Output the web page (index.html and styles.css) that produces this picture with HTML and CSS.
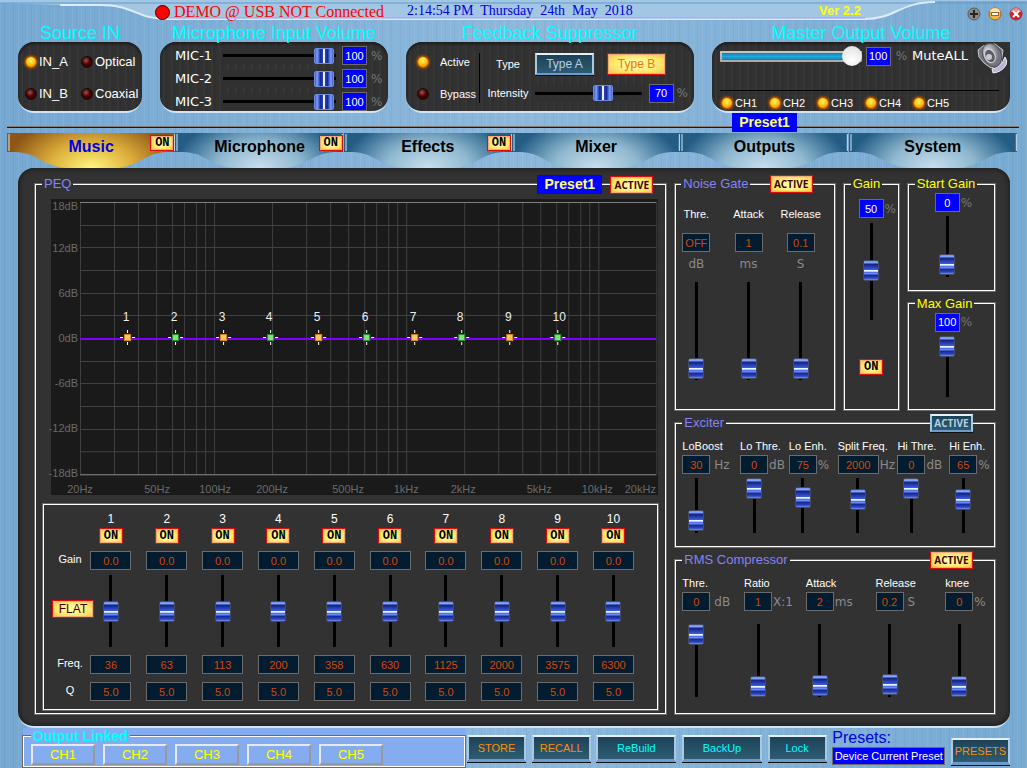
FILE: index.html
```html
<!DOCTYPE html>
<html lang="en">
  <head>
    <meta charset="UTF-8" />
    <meta name="viewport" content="width=device-width, initial-scale=1.0" />
    <title>DSP Control Panel</title>
    <link rel="stylesheet" href="styles.css">
  </head>

  <body>
    <header class="titlebar">
      <svg class="swoosh" viewBox="0 0 1027 24" preserveAspectRatio="none" aria-hidden="true">
        <path d="M0 0H1027V1H935C900 1 895 19 865 19H168C135 19 135 5 100 5H60L0 3Z" fill="#a3c6e2" />
        <path d="M0 3H1027" stroke="#5f9bd0" fill="none" />
        <path d="M60 5H100C135 5 135 19 168 19H865C895 19 900 2 935 2" stroke="#dcecf8" stroke-width="2" fill="none" />
        <path d="M168 18H865" stroke="#9a9aff" fill="none" />
      </svg>
      <div class="titlebar-row">
        <span class="status"><span class="dot"></span>DEMO @ USB NOT Connected</span>
        <span class="clock">2:14:54 PM  Thursday  24th  May  2018</span>
        <span class="version">Ver 2.2</span>
        <span class="window-buttons">
          <button class="win" aria-label="Maximize">
            <svg viewBox="0 0 14 14"><circle cx="7" cy="7" r="6" fill="#8a8a8a" stroke="#5c5c5c" /><path d="M7 3V11M3 7H11" stroke="#222" stroke-width="2" /></svg>
          </button>
          <button class="win" aria-label="Minimize">
            <svg viewBox="0 0 14 14"><circle cx="7" cy="7" r="6" fill="#f3b53c" stroke="#a5602a" /><path d="M2 5a5 4 0 0 1 10 0z" fill="#fbe3a8" /><path d="M3 7H11" stroke="#a5602a" stroke-width="4" /><path d="M4 7H10" stroke="#fff" stroke-width="2" /></svg>
          </button>
          <button class="win" aria-label="Close">
            <svg viewBox="0 0 14 14"><circle cx="7" cy="7" r="6" fill="#d8202c" stroke="#96303c" /><path d="M2 5a5 4 0 0 1 10 0z" fill="#f08a90" /><path d="M4 4L10 10M10 4L4 10" stroke="#fff" stroke-width="2" /></svg>
          </button>
        </span>
      </div>
    </header>

    <section class="top">
      <div>
        <h2>Source IN</h2>
        <div class="box source">
          <label><input type="radio" class="led" name="src" checked />IN_A</label>
          <label><input type="radio" class="led" name="src" />Optical</label>
          <label><input type="radio" class="led" name="src" />IN_B</label>
          <label><input type="radio" class="led" name="src" />Coaxial</label>
        </div>
      </div>

      <div>
        <h2>Microphone Input Volume</h2>
        <div class="box mics">
          <div class="mic"><label for="mic1">MIC-1</label><input type="range" class="hslider" id="mic1" value="98" /><input type="text" class="blue" value="100" aria-label="MIC-1 value" /><span class="pct">%</span></div>
          <div class="mic"><label for="mic2">MIC-2</label><input type="range" class="hslider" id="mic2" value="98" /><input type="text" class="blue" value="100" aria-label="MIC-2 value" /><span class="pct">%</span></div>
          <div class="mic"><label for="mic3">MIC-3</label><input type="range" class="hslider" id="mic3" value="98" /><input type="text" class="blue" value="100" aria-label="MIC-3 value" /><span class="pct">%</span></div>
        </div>
      </div>

      <div>
        <h2>Feedback Suppressor</h2>
        <div class="box feedback">
          <div class="fb-mode">
            <label><input type="radio" class="led" name="fb" checked />Active</label>
            <label><input type="radio" class="led" name="fb" />Bypass</label>
          </div>
          <div class="fb-set">
            <div class="fb-row"><span>Type</span><button class="steel type">Type A</button><button class="lit type">Type B</button></div>
            <div class="fb-row"><label for="intensity">Intensity</label><input type="range" class="hslider" id="intensity" value="67" /><input type="text" class="blue" value="70" aria-label="Intensity value" /><span class="pct">%</span></div>
          </div>
        </div>
      </div>

      <div>
        <h2>Master Output Volume</h2>
        <div class="box master">
          <div class="master-row">
            <input type="range" class="volume" value="100" aria-label="Master volume" />
            <input type="text" class="blue" value="100" aria-label="Master volume value" /><span class="pct">%</span>
            <span class="mute">MuteALL</span>
            <button class="speaker" aria-label="Mute all">
              <svg viewBox="0 0 35 34">
                <defs>
                  <radialGradient id="cone" cx="40%" cy="35%"><stop offset="0" stop-color="#f4f4fa" /><stop offset="1" stop-color="#75757f" /></radialGradient>
                </defs>
                <path d="M30 15q3 4 1 8q-4 7-13 8l-1-4q9-1 13-12z" fill="#b9b4e0" stroke="#eee" />
                <path d="M3 8L8 4L20 2L28 8L26 22L16 26L9 21L4 15Z" fill="#77777f" stroke="#c9c9d2" />
                <ellipse cx="17" cy="13" rx="9" ry="12" transform="rotate(-25 17 13)" fill="url(#cone)" stroke="#55555c" />
                <ellipse cx="15" cy="14" rx="5" ry="7" transform="rotate(-25 15 14)" fill="#5d5d66" stroke="#ddd" />
                <circle cx="14" cy="15" r="3" fill="#c9c9d6" />
              </svg>
            </button>
          </div>
          <div class="channels">
            <label><input type="checkbox" class="led" checked />CH1</label>
            <label><input type="checkbox" class="led" checked />CH2</label>
            <label><input type="checkbox" class="led" checked />CH3</label>
            <label><input type="checkbox" class="led" checked />CH4</label>
            <label><input type="checkbox" class="led" checked />CH5</label>
          </div>
        </div>
      </div>
    </section>

    <div class="preset-strip"><span class="preset">Preset1</span></div>

    <svg class="defs" aria-hidden="true">
      <defs>
        <radialGradient id="steelTab" cx=".5" cy="1" r=".5" gradientTransform="translate(0 -2) scale(1 3)"><stop offset="0" stop-color="#c8deec" /><stop offset=".5" stop-color="#8fb8d0" /><stop offset="1" stop-color="#235d85" /></radialGradient>
        <radialGradient id="goldTab" cx=".5" cy="1" r=".5" gradientTransform="translate(0 -2) scale(1 3)"><stop offset="0" stop-color="#fff67c" /><stop offset=".5" stop-color="#dcae3a" /><stop offset="1" stop-color="#8e5616" /></radialGradient>
        <symbol id="tabShape" viewBox="0 0 168 35" preserveAspectRatio="none">
          <path d="M0 0H168V19C140 18 140 27 120 33Q116 35 110 35H60Q54 35 48 33C28 27 28 18 0 19Z" />
          <path d="M2 1V18M167 1V18" stroke="#d4e8f6" />
        </symbol>
      </defs>
    </svg>
    <nav class="tabs">
      <div class="tab current"><svg class="shape"><use href="#tabShape" /></svg><a href="#music">Music</a><button class="lit on">ON</button></div>
      <div class="tab"><svg class="shape"><use href="#tabShape" /></svg><a href="#microphone">Microphone</a><button class="lit on">ON</button></div>
      <div class="tab"><svg class="shape"><use href="#tabShape" /></svg><a href="#effects">Effects</a><button class="lit on">ON</button></div>
      <div class="tab"><svg class="shape"><use href="#tabShape" /></svg><a href="#mixer">Mixer</a></div>
      <div class="tab"><svg class="shape"><use href="#tabShape" /></svg><a href="#outputs">Outputs</a></div>
      <div class="tab"><svg class="shape"><use href="#tabShape" /></svg><a href="#system">System</a></div>
    </nav>

    <main class="panel">
      <fieldset class="peq">
        <legend>PEQ</legend>
        <div class="badges"><span class="preset">Preset1</span><button class="lit active">ACTIVE</button></div>
        <svg class="graph" id="graph" viewBox="0 0 607 296"></svg>
        <div class="eq">
          <div class="band names">
            <span></span><span></span><span class="name">Gain</span>
            <button class="lit flat">FLAT</button>
            <span class="name">Freq.</span><span class="name">Q</span>
          </div>
          <div class="bands" id="bands"></div>
        </div>
      </fieldset>

      <div class="side">
        <div class="side-top">
          <fieldset class="gate">
            <legend>Noise Gate</legend>
            <div class="badges"><button class="lit active">ACTIVE</button></div>
            <div class="gate-col"><label for="ngThre">Thre.</label><input type="text" class="num" value="OFF" aria-label="Threshold value" /><span class="unit">dB</span><input type="range" class="vslider" id="ngThre" value="1" /></div>
            <div class="gate-col"><label for="ngAttack">Attack</label><input type="text" class="num" value="1" aria-label="Attack value" /><span class="unit">ms</span><input type="range" class="vslider" id="ngAttack" value="1" /></div>
            <div class="gate-col"><label for="ngRelease">Release</label><input type="text" class="num" value="0.1" aria-label="Release value" /><span class="unit">S</span><input type="range" class="vslider" id="ngRelease" value="1" /></div>
          </fieldset>

          <fieldset class="gain">
            <legend>Gain</legend>
            <div class="pair"><input type="text" class="blue" value="50" aria-label="Gain value" /><span class="pct">%</span></div>
            <input type="range" class="vslider" value="51" aria-label="Gain" />
            <button class="lit on">ON</button>
          </fieldset>

          <div class="gain-stack">
            <fieldset class="gain small">
              <legend>Start Gain</legend>
              <div class="pair"><input type="text" class="blue" value="0" aria-label="Start gain value" /><span class="pct">%</span></div>
              <input type="range" class="vslider" value="5" aria-label="Start gain" />
            </fieldset>
            <fieldset class="gain small">
              <legend>Max Gain</legend>
              <div class="pair"><input type="text" class="blue" value="100" aria-label="Max gain value" /><span class="pct">%</span></div>
              <input type="range" class="vslider" value="100" aria-label="Max gain" />
            </fieldset>
          </div>
        </div>

        <fieldset class="exciter">
          <legend>Exciter</legend>
          <div class="badges"><button class="steel active">ACTIVE</button></div>
          <div class="fx"><label for="loBoost">LoBoost</label><div class="pair wide"><input type="text" class="num" value="30" aria-label="LoBoost value" /><span class="unit">Hz</span></div><input type="range" class="vslider" id="loBoost" value="7" /></div>
          <div class="fx"><label for="loThre">Lo Thre.</label><div class="pair"><input type="text" class="num" value="0" aria-label="Lo threshold value" /><span class="unit">dB</span></div><input type="range" class="vslider" id="loThre" value="100" /></div>
          <div class="fx"><label for="loEnh">Lo Enh.</label><div class="pair"><input type="text" class="num" value="75" aria-label="Lo enhance value" /><span class="unit">%</span></div><input type="range" class="vslider" id="loEnh" value="75" /></div>
          <div class="fx long"><label for="split">Split Freq.</label><div class="pair"><input type="text" class="num" value="2000" aria-label="Split frequency value" /><span class="unit">Hz</span></div><input type="range" class="vslider" id="split" value="67" /></div>
          <div class="fx"><label for="hiThre">Hi Thre.</label><div class="pair"><input type="text" class="num" value="0" aria-label="Hi threshold value" /><span class="unit">dB</span></div><input type="range" class="vslider" id="hiThre" value="100" /></div>
          <div class="fx"><label for="hiEnh">Hi Enh.</label><div class="pair"><input type="text" class="num" value="65" aria-label="Hi enhance value" /><span class="unit">%</span></div><input type="range" class="vslider" id="hiEnh" value="67" /></div>
        </fieldset>

        <fieldset class="rms">
          <legend>RMS Compressor</legend>
          <div class="badges"><button class="lit active">ACTIVE</button></div>
          <div class="fx"><label for="rThre">Thre.</label><div class="pair wide"><input type="text" class="num" value="0" aria-label="Threshold value" /><span class="unit">dB</span></div><input type="range" class="vslider" id="rThre" value="100" /></div>
          <div class="fx"><label for="rRatio">Ratio</label><div class="pair"><input type="text" class="num" value="1" aria-label="Ratio value" /><span class="unit">X:1</span></div><input type="range" class="vslider" id="rRatio" value="0" /></div>
          <div class="fx"><label for="rAttack">Attack</label><div class="pair"><input type="text" class="num" value="2" aria-label="Attack value" /><span class="unit">ms</span></div><input type="range" class="vslider" id="rAttack" value="2" /></div>
          <div class="fx"><label for="rRelease">Release</label><div class="pair wide"><input type="text" class="num" value="0.2" aria-label="Release value" /><span class="unit">S</span></div><input type="range" class="vslider" id="rRelease" value="4" /></div>
          <div class="fx"><label for="rKnee">knee</label><div class="pair"><input type="text" class="num" value="0" aria-label="Knee value" /><span class="unit">%</span></div><input type="range" class="vslider" id="rKnee" value="0" /></div>
        </fieldset>
      </div>
    </main>

    <footer class="footer">
      <div class="linked-wrap">
        <fieldset class="linked">
          <legend>Output Linked</legend>
          <button class="ch">CH1</button>
          <button class="ch">CH2</button>
          <button class="ch">CH3</button>
          <button class="ch">CH4</button>
          <button class="ch">CH5</button>
        </fieldset>
      </div>
      <div class="actions">
        <button class="steel big orange">STORE</button>
        <button class="steel big orange">RECALL</button>
        <button class="steel big cyan long">ReBuild</button>
        <button class="steel big cyan long">BackUp</button>
        <button class="steel big cyan">Lock</button>
        <div class="current-preset">
          <label for="devicePreset">Presets:</label>
          <input type="text" id="devicePreset" value="Device Current Preset" />
        </div>
        <button class="steel big orange last">PRESETS</button>
      </div>
    </footer>

    <script src="script.js"></script>
  </body>
</html>
```
FILE: styles.css
```css
* {
  box-sizing: border-box;
}
body {
  margin: 0;
  min-height: 100vh;
  font-family: "Liberation Sans", Arial, sans-serif;
  font-size: 11px;
  line-height: 16px;
  color: #fff;
  background:
    repeating-linear-gradient(90deg, rgba(255, 255, 255, 0.06) 0 1px, transparent 1px 4px, rgba(20, 60, 110, 0.05) 4px 5px, transparent 5px 9px),
    linear-gradient(90deg, #76a8d2, #8db8dc 50%, #78aad2);
}
button, input {
  font: inherit;
  margin: 0;
  padding: 0;
}
button {
  cursor: pointer;
  white-space: nowrap;
}
fieldset {
  position: relative;
  min-width: 0;
  margin: 0;
  padding: 0 6px;
  border: 1px solid #fff;
  box-shadow: 0 0 0 1px #6b6b6b;
}
legend {
  padding: 0 2px;
  background: #323232;
  color: #8484f8;
  font-size: 13px;
  line-height: 18px;
}

/* title bar */
.titlebar {
  display: grid;
  height: 24px;
}
.swoosh, .titlebar-row {
  grid-area: 1 / 1;
}
.swoosh {
  width: 100%;
  height: 24px;
}
.titlebar-row {
  display: grid;
  grid-template-columns: 155fr 252fr 412fr 148fr 60px;
  color: #0000e0;
  font-family: "Liberation Serif", "Times New Roman", serif;
  font-size: 14px;
  line-height: 22px;
  white-space: pre;
}
.status {
  grid-column: 2;
  display: flex;
  align-items: center;
  gap: 4px;
  font-size: 16px;
  color: #f00;
}
.dot {
  width: 15px;
  height: 15px;
  border: 1px solid #300;
  border-radius: 50%;
  background: #f00;
}
.version {
  color: #ff0;
  font: bold 13px/22px "Liberation Sans", Arial, sans-serif;
}
.window-buttons {
  display: flex;
  gap: 7px;
  align-items: flex-end;
  padding-bottom: 3px;
}
.win {
  width: 14px;
  height: 14px;
  border: 0;
  background: none;
}
.win svg {
  display: block;
}

/* top boxes */
.top {
  display: grid;
  grid-template-columns: minmax(0, 124fr) minmax(0, 228fr) minmax(0, 288fr) minmax(0, 298fr);
  gap: 18px;
  padding: 0 17px 0 18px;
}
h2 {
  margin: 0;
  color: #0ff;
  font-size: 18px;
  font-weight: normal;
  line-height: 18px;
  text-align: center;
  white-space: nowrap;
}
.box {
  height: 71px;
  border-radius: 16px;
  border-bottom: 2px solid #cfe4f6;
  background: repeating-linear-gradient(90deg, #323232 0 3px, #363636 3px 5px, #303030 5px 8px);
  box-shadow: inset 0 2px 3px #1c1c1c;
}
.box label {
  display: flex;
  align-items: center;
}
.led {
  appearance: none;
  flex: none;
  width: 12px;
  height: 12px;
  border: 1px solid #1c0a0a;
  border-radius: 50%;
  background: radial-gradient(circle at 40% 35%, #a05050, #4a0000 45%, #200000);
}
.led:checked {
  border-color: #c05a00;
  background: radial-gradient(circle at 45% 35%, #fff27a, #ffc000 50%, #e07000);
  box-shadow: 0 0 2px 1px #a04800;
}
.pct, .unit {
  color: #8a8a8a;
  font-family: "DejaVu Sans", Verdana, sans-serif;
  font-size: 12px;
}
.pct {
  color: #757575;
}
.blue {
  flex: none;
  width: 25px;
  height: 19px;
  border: 1px solid #6b6b6b;
  background: #00f;
  color: #fff;
  text-align: center;
}
.source {
  display: grid;
  grid-template-columns: 56fr 61fr;
  align-content: center;
  row-gap: 16px;
  padding: 2px 0 0 7px;
  font-size: 13px;
}
.source label {
  gap: 2px;
}
.mics {
  display: flex;
  flex-direction: column;
  justify-content: space-between;
  padding: 4px 3px 0 15px;
}
.mic {
  display: flex;
  align-items: center;
  gap: 6px;
}
.mic label {
  width: 42px;
  font-family: "DejaVu Sans", Verdana, sans-serif;
  font-size: 13px;
}
.mic .pct {
  width: 14px;
  margin-left: -2px;
}

/* sliders */
.hslider, .vslider {
  appearance: none;
  display: block;
  margin: 0;
}
.hslider {
  flex: 1;
  min-width: 0;
  height: 17px;
  background: linear-gradient(#000, #000) center / 100% 3px no-repeat #303030;
}
.hslider::-webkit-slider-thumb {
  appearance: none;
  width: 20px;
  height: 16px;
  border: 1px solid #6d8ae0;
  border-radius: 2px;
  background: linear-gradient(90deg, #3d5ed0, #7ea0ff 12%, #1a2a94 30%, #2a40b0 44%, #e8f2ff 46% 54%, #2a40b0 56%, #1a2a94 70%, #7ea0ff 88%, #3d5ed0);
}
.vslider {
  writing-mode: vertical-lr;
  direction: rtl;
  width: 16px;
  height: 72px;
  background: linear-gradient(#000, #000) center / 3px 100% no-repeat;
}
.vslider::-webkit-slider-thumb {
  appearance: none;
  width: 16px;
  height: 21px;
  border: 1px solid #444a60;
  border-radius: 2px;
  background: linear-gradient(#6f92f4, #7ea0ff 8%, #16247c 18%, #2c46c0 36%, #3c5ce0 46%, #e8f6ff 47% 55%, #3c5ce0 56%, #6a8af8 66%, #1a2a94 76%, #2c46c0 90%, #6f92f4);
}
.volume {
  appearance: none;
  flex: 1;
  min-width: 0;
  height: 21px;
  border-radius: 6px;
  background: linear-gradient(#0f7fb4, #22a8e0 50%, #0f7fb4) 2px center / 130px 7px no-repeat, linear-gradient(#c8c8c0, #a8a8a0) center / 100% 11px no-repeat;
}
.volume::-webkit-slider-thumb {
  appearance: none;
  width: 20px;
  height: 20px;
  border-radius: 50%;
  background: radial-gradient(circle at 50% 70%, #fff, #dcdcdc);
}

/* glossy buttons */
.lit {
  border: 1px solid #d81010;
  background: radial-gradient(ellipse at 50% 50%, #fff79a 30%, #fbe05a 70%, #f3b070);
  box-shadow: inset 0 0 0 1px #f5a878;
  color: #400000;
}
.steel {
  border: 2px solid #a9c8e2;
  border-top-color: #e4f0fa;
  border-bottom-color: #6d9ccc;
  background: linear-gradient(#1d4258, #2d5c72);
  color: #b4cfe4;
  box-shadow: 0 1px 0 #101010;
}
.on {
  width: 24px;
  height: 16px;
  color: #000;
  font: bold 12px/12px "Liberation Mono", monospace;
}
.active {
  width: 43px;
  height: 18px;
  font: bold 10px/12px "Open Sans", sans-serif;
}
.type {
  width: 59px;
  height: 22px;
  font-size: 12px;
}
.lit.type {
  color: #f07800;
}
.feedback {
  display: flex;
  align-items: center;
  padding: 2px 6px 0 11px;
}
.fb-mode {
  flex: none;
  display: flex;
  flex-direction: column;
  justify-content: space-between;
  gap: 16px;
  padding: 1px 0;
  width: 63px;
  height: 50px;
  border-right: 1px solid #000;
}
.fb-mode label {
  gap: 11px;
}
.fb-set {
  flex: 1;
  display: flex;
  flex-direction: column;
  gap: 9px;
  min-width: 0;
  padding-left: 8px;
}
.fb-row {
  display: flex;
  align-items: center;
}
.fb-row > :first-child {
  flex: none;
  justify-content: center;
  width: 40px;
  margin-right: 7px;
  text-align: center;
}
.fb-row .type + .type {
  margin-left: 13px;
}
.fb-row .blue {
  margin: 0 3px 0 7px;
}
.master {
  padding: 0 0 0 8px;
}
.master-row {
  display: flex;
  align-items: center;
  height: 34px;
}
.master-row .volume {
  margin: 0 4px 6px 0;
}
.master-row .blue {
  margin-bottom: 6px;
}
.master-row .pct {
  margin: 0 5px 6px;
}
.mute {
  margin: 0 7px 6px 0;
  font-family: "DejaVu Sans", Verdana, sans-serif;
  font-size: 13px;
}
.speaker {
  width: 35px;
  height: 34px;
  border: 0;
  background: #303030;
}
.speaker svg {
  display: block;
}
.channels {
  display: flex;
  margin: 14px 11px 0 0;
  padding-top: 4px;
  border-top: 1px solid #000;
}
.channels label {
  gap: 2px;
  width: 48px;
  padding-left: 1px;
}

/* preset strip and tabs */
.preset-strip {
  display: flex;
  height: 19px;
  margin: 0 8px 0 7px;
  padding-left: 70.6%;
  background: linear-gradient(#8a7a70 50%, #0000d0 50%) 0 13px / 100% 2px no-repeat;
}
.preset {
  display: block;
  width: 65px;
  height: 19px;
  background: #00f;
  color: #ffff80;
  font-size: 14px;
  font-weight: bold;
  line-height: 18px;
  text-align: center;
}
.defs {
  display: block;
  width: 0;
  height: 0;
}
.tabs {
  display: grid;
  grid-template-columns: repeat(6, 1fr);
  height: 35px;
  margin: 1px 10px 0 7px;
}
.tab {
  position: relative;
  display: grid;
}
.shape {
  grid-area: 1 / 1;
  width: 100%;
  height: 35px;
  fill: url(#steelTab);
}
.current .shape {
  fill: url(#goldTab);
}
.tab a {
  grid-area: 1 / 1;
  z-index: 1;
  color: #000;
  font-size: 16px;
  font-weight: bold;
  line-height: 27px;
  text-align: center;
  text-decoration: none;
}
.current a {
  color: #0000e0;
}
.tab .on {
  position: absolute;
  z-index: 2;
  top: 2px;
  right: 1px;
}

/* main panel */
.panel {
  display: grid;
  grid-template-columns: 632fr 320fr;
  gap: 9px;
  margin: 0 17px 0 18px;
  padding: 7px 15px 12px 17px;
  border-radius: 16px;
  border-bottom: 2px solid #cfe4f6;
  background: #323232;
  box-shadow: inset 0 0 4px 2px #222;
}
.badges {
  position: absolute;
  top: -18px;
  right: 21px;
  display: flex;
  gap: 8px;
  align-items: center;
}
.peq {
  padding: 6px 7px 2px 6px;
}
.peq .badges {
  right: 12px;
}
.graph {
  display: block;
  overflow: visible;
  width: calc(100% - 9px);
  margin: 0 0 9px 9px;
  background: #1a1a1a;
}
.graph .grid line {
  stroke: #404040;
}
.graph .frame {
  stroke: #808080;
}
.graph .curve {
  stroke: #8000ff;
  stroke-width: 2;
}
.graph .scale {
  fill: #6a6a6a;
  font-size: 11px;
}
.graph .mark {
  fill: #eee;
  font-size: 12px;
  text-anchor: middle;
}
.graph .cross {
  stroke: #fff;
}
.eq {
  display: flex;
  margin-left: 1px;
  padding: 6px 16px 8px 8px;
  border: 1px solid #fff;
  box-shadow: 0 0 0 1px #6b6b6b;
}
.band {
  display: grid;
  grid-template-rows: 17px 23px 24px 80px 27px 19px;
  justify-items: center;
  align-items: start;
}
.names {
  width: 31px;
  justify-items: start;
}
.name {
  width: 36px;
  text-align: center;
}
.flat {
  z-index: 1;
  align-self: center;
  width: 42px;
  height: 18px;
  margin-bottom: 12px;
  font-size: 12px;
}
.bands {
  flex: 1;
  display: grid;
  grid-template-columns: repeat(10, 1fr);
}
.bands label {
  font-size: 12px;
}
.num {
  flex: none;
  width: 28px;
  height: 19px;
  border: 1px solid #6b6b6b;
  background: #041c30;
  color: #d04808;
  text-align: center;
}
.band .num {
  width: 41px;
}

/* right side */
.side {
  display: flex;
  flex-direction: column;
  gap: 4px;
}
.side-top {
  display: grid;
  grid-template-columns: 159fr 55fr 87fr;
  gap: 9px;
}
.gate {
  display: flex;
  justify-content: space-between;
  padding: 13px 18px 0 5px;
}
.gate-col {
  display: flex;
  flex-direction: column;
  align-items: center;
  width: 30px;
}
.gate-col .num {
  margin: 11px 0 4px;
}
.gate-col .vslider {
  height: 98px;
  margin-top: 10px;
}
.gain {
  display: flex;
  flex-direction: column;
  align-items: center;
  padding-top: 6px;
  padding-bottom: 34px;
}
.gain legend {
  color: #ff0;
}
.gain .pair {
  margin-left: 12px;
}
.gain .vslider {
  height: 97px;
  margin-top: 5px;
}
.gain .on {
  margin-top: 39px;
}
.gain-stack {
  display: flex;
  flex-direction: column;
  gap: 4px;
}
.gain.small {
  flex: 1;
  padding: 0 14px 0 6px;
}
.gain.small .vslider {
  height: 61px;
  margin-top: 4px;
}
.pair {
  display: flex;
  align-items: center;
  gap: 1px;
}
.pair.wide {
  gap: 4px;
}
.exciter, .rms {
  display: grid;
  padding-top: 6px;
}
.exciter {
  grid-template-columns: 58fr 49fr 49fr 60fr 52fr 45fr;
  padding-right: 0;
  padding-bottom: 13px;
}
.rms {
  grid-template-columns: 62fr 62fr 70fr 70fr 49fr;
  padding-right: 0;
  padding-bottom: 16px;
}
.fx {
  min-width: 0;
  white-space: nowrap;
}
.fx label {
  display: block;
  margin-bottom: 1px;
}
.fx .vslider {
  height: 55px;
  margin: 4px 0 0 6px;
}
.fx.long .num {
  width: 41px;
}
.fx.long .vslider {
  margin-left: 12px;
}
.rms .vslider {
  height: 73px;
  margin-top: 13px;
}

/* footer */
.footer {
  display: grid;
  grid-template-columns: 442fr 543fr;
  gap: 2px;
  padding: 0 17px 0 23px;
}
.linked-wrap {
  background: #84acee;
}
.linked {
  display: flex;
  gap: 8px;
  height: 39px;
  padding: 0 7px;
}
.linked legend {
  background: #84acee;
  color: #0ff;
  font-weight: bold;
  font-size: 14px;
  line-height: 16px;
}
.ch {
  width: 64px;
  height: 21px;
  border: 2px outset #e8e8f0;
  background: #84acee;
  color: #ff0;
  font-size: 13px;
  line-height: 16px;
}
.actions {
  display: flex;
  justify-content: space-between;
  padding-top: 7px;
}
.big {
  width: 59px;
  height: 27px;
  border-bottom-width: 3px;
}
.big.long {
  width: 80px;
}
.big.last {
  margin-top: 3px;
}
.orange {
  color: #ff8c00;
}
.cyan {
  color: #0ff;
}
.current-preset {
  margin-top: -6px;
  width: 113px;
  color: #0000e0;
}
.current-preset label {
  display: block;
  font-size: 16px;
  line-height: 18px;
}
.current-preset input {
  display: block;
  width: 100%;
  height: 18px;
  border: 1px solid #6b6b6b;
  background: #00f;
  color: #fff;
  text-align: center;
}
```
FILE: script.js
```js
const graph = document.getElementById("graph");
const left = 29;
const right = 605;
const top0 = 3;
const bottom = 275;

// 20Hz - 20kHz on a log scale
function freqX(f) {
  return Math.round(left + (Math.log10(f / 20) * (right - left)) / 3) + 0.5;
}

let svg = '<g class="grid">';
for (const decade of [10, 100, 1000, 10000]) {
  for (let i = 1; i < 10; i++) {
    const f = decade * i;
    if (f < 20 || f > 20000) continue;
    svg += `<line x1="${freqX(f)}" x2="${freqX(f)}" y1="${top0}" y2="${bottom}" />`;
  }
}
for (let i = 0; i <= 12; i++) {
  const y = Math.round(top0 + ((bottom - top0) * i) / 12) + 0.5;
  svg += `<line x1="${left}" x2="${right}" y1="${y}" y2="${y}" />`;
}
svg += "</g>";
svg += `<line class="frame" x1="${left}" x2="${right}" y1="3.5" y2="3.5" />`;
svg += `<line class="frame" x1="${left}" x2="${right}" y1="275.5" y2="275.5" />`;
svg += `<line class="curve" x1="${left}" x2="${right}" y1="140" y2="140" />`;

["18dB", "12dB", "6dB", "0dB", "-6dB", "-12dB", "-18dB"].forEach((t, i) => {
  const y = i === 0 ? 11 : 8 + i * 45;
  svg += `<text class="scale" text-anchor="end" x="27" y="${y}">${t}</text>`;
});
const freqs = { "20Hz": 29, "50Hz": 106, "100Hz": 164, "200Hz": 221, "500Hz": 297, "1kHz": 355, "2kHz": 412, "5kHz": 488, "10kHz": 546, "20kHz": 589 };
for (const t in freqs) {
  svg += `<text class="scale" text-anchor="middle" x="${freqs[t]}" y="294">${t}</text>`;
}
for (let i = 0; i < 10; i++) {
  const x = Math.round(76 + i * 47.75);
  const fill = i % 2 ? "#7be87b" : "#ffc860";
  const edge = i % 2 ? "#2f8f2f" : "#d88a10";
  svg += `<path class="cross" d="M${x - 7} 138.5h3M${x + 5} 138.5h3M${x + 0.5} 131v3M${x + 0.5} 143v3" />`;
  svg += `<rect x="${x - 2.5}" y="135.5" width="6" height="6" fill="${fill}" stroke="${edge}" />`;
  svg += `<text class="mark" x="${x + (i === 9 ? 2 : -1)}" y="122">${i + 1}</text>`;
}
graph.innerHTML = svg;

const bandFreqs = [36, 63, 113, 200, 358, 630, 1125, 2000, 3575, 6300];
document.getElementById("bands").innerHTML = bandFreqs
  .map(
    (f, i) => `
    <div class="band">
      <label for="band${i + 1}">${i + 1}</label>
      <button class="lit on">ON</button>
      <input type="text" class="num" value="0.0" aria-label="Gain ${i + 1}" />
      <input type="range" class="vslider" id="band${i + 1}" value="50" />
      <input type="text" class="num" value="${f}" aria-label="Frequency ${i + 1}" />
      <input type="text" class="num" value="5.0" aria-label="Q ${i + 1}" />
    </div>`
  )
  .join("");
```
